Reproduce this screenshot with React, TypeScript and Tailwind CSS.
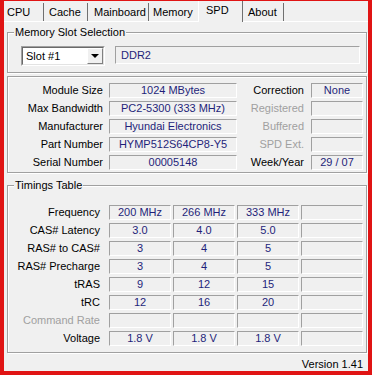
import React from "react";

const VAL = "text-[#1f1f7a]";

function Box({
  children,
  className = "",
}: {
  children?: React.ReactNode;
  className?: string;
}) {
  return (
    <div
      className={`h-[15px] flex items-center justify-center border border-t-[#a0a0a0] border-l-[#a0a0a0] border-b-white border-r-white leading-none whitespace-nowrap ${VAL} ${className}`}
    >
      {children}
    </div>
  );
}

function Group({
  title,
  className = "",
  children,
}: {
  title?: string;
  className?: string;
  children?: React.ReactNode;
}) {
  return (
    <div
      className={`relative w-[360px] border border-[#a0a0a0] shadow-[inset_1px_1px_0_#fff,1px_1px_0_#fff] ${className}`}
    >
      {title && (
        <span className="absolute left-[6px] -top-[8px] bg-[#f0f0f0] px-[1px] leading-[14px]">
          {title}
        </span>
      )}
      {children}
    </div>
  );
}

function Tab({
  children,
  className = "",
}: {
  children: React.ReactNode;
  className?: string;
}) {
  return (
    <div
      className={`h-[18px] border-r border-r-[#707070] leading-[14px] pt-[2px] ${className}`}
    >
      {children}
    </div>
  );
}

function InfoRow({
  label,
  value,
  rlabel,
  rvalue,
  rdim,
}: {
  label: string;
  value: string;
  rlabel: string;
  rvalue?: string;
  rdim?: boolean;
}) {
  return (
    <div className="flex items-center h-[15px]">
      <div className="w-[95px] text-right leading-[15px]">{label}</div>
      <Box className="ml-[6px] w-[128px]">{value}</Box>
      <div
        className={`w-[67px] text-right leading-[15px] ${rdim ? "text-[#a0a0a0]" : ""}`}
      >
        {rlabel}
      </div>
      <Box className="ml-[7px] w-[52px]">{rvalue}</Box>
    </div>
  );
}

function TimingRow({
  label,
  vals,
  dim,
}: {
  label: string;
  vals: string[];
  dim?: boolean;
}) {
  return (
    <div className="flex items-center h-[15px]">
      <div
        className={`w-[92px] text-right leading-[15px] ${dim ? "text-[#a0a0a0]" : ""}`}
      >
        {label}
      </div>
      <div className="ml-[9px] flex gap-[2px]">
        {[0, 1, 2, 3].map((i) => (
          <Box key={i} className="w-[62px]">
            {vals[i] ?? ""}
          </Box>
        ))}
      </div>
    </div>
  );
}

export default function App() {
  return (
    <div className="w-[372px] h-[375px] bg-[#e01414] pl-[4px] pr-[4px] pt-[1px] pb-[4px] font-['Liberation_Sans',Arial,sans-serif] text-[11px] text-black">
      <div className="w-[364px] h-[370px] bg-[#f0f0f0] flex flex-col">
        {/* Tabs */}
        <div className="flex h-[20px] items-end">
          <Tab className="w-[40px] pl-[3px]">CPU</Tab>
          <Tab className="w-[44px] pl-[5px]">Cache</Tab>
          <Tab className="w-[61px] pl-[6px]">Mainboard</Tab>
          <div className="w-[49px] h-[18px] pl-[4px] leading-[14px] pt-[2px]">
            Memory
          </div>
          <div className="relative z-10 w-[45px] h-[21px] -mb-[1px] bg-[#f0f0f0] border-l border-l-white border-r border-r-[#707070] pl-[7px] pt-[2px] leading-[14px]">
            SPD
          </div>
          <Tab className="w-[41px] pl-[5px]">About</Tab>
        </div>

        {/* Tab page */}
        <div className="flex-1 border-t border-t-white px-[3px] flex flex-col">
          <Group title="Memory Slot Selection" className="mt-[10px] h-[41px]">
            <div className="flex items-start pt-[13px] pl-[13px]">
              <div className="w-[84px] h-[20px] bg-white border border-t-[#a0a0a0] border-l-[#a0a0a0] border-b-white border-r-white flex">
                <div className="flex-1 flex border border-t-[#696969] border-l-[#696969] border-b-[#e3e3e3] border-r-[#e3e3e3]">
                  <div className="flex-1 pl-[3px] leading-[16px]">Slot #1</div>
                  <div className="w-[16px] h-[16px] bg-[#f0f0f0] border border-t-white border-l-white border-b-[#808080] border-r-[#808080] flex items-center justify-center">
                    <div className="w-0 h-0 border-l-[4px] border-r-[4px] border-t-[4px] border-l-transparent border-r-transparent border-t-black" />
                  </div>
                </div>
              </div>
              <div
                className={`ml-[10px] w-[245px] h-[18px] border border-t-[#a0a0a0] border-l-[#a0a0a0] border-b-white border-r-white pl-[5px] leading-[16px] ${VAL}`}
              >
                DDR2
              </div>
            </div>
          </Group>

          <Group className="mt-[3px] h-[97px]">
            <div className="flex flex-col gap-[3px] pt-[6px]">
              <InfoRow
                label="Module Size"
                value="1024 MBytes"
                rlabel="Correction"
                rvalue="None"
              />
              <InfoRow
                label="Max Bandwidth"
                value="PC2-5300 (333 MHz)"
                rlabel="Registered"
                rdim
              />
              <InfoRow
                label="Manufacturer"
                value="Hyundai Electronics"
                rlabel="Buffered"
                rdim
              />
              <InfoRow
                label="Part Number"
                value="HYMP512S64CP8-Y5"
                rlabel="SPD Ext."
                rdim
              />
              <InfoRow
                label="Serial Number"
                value="00005148"
                rlabel="Week/Year"
                rvalue="29 / 07"
              />
            </div>
          </Group>

          <Group title="Timings Table" className="mt-[12px] h-[168px]">
            <div className="flex flex-col gap-[3px] pt-[19px]">
              <TimingRow
                label="Frequency"
                vals={["200 MHz", "266 MHz", "333 MHz"]}
              />
              <TimingRow label="CAS# Latency" vals={["3.0", "4.0", "5.0"]} />
              <TimingRow label="RAS# to CAS#" vals={["3", "4", "5"]} />
              <TimingRow label="RAS# Precharge" vals={["3", "4", "5"]} />
              <TimingRow label="tRAS" vals={["9", "12", "15"]} />
              <TimingRow label="tRC" vals={["12", "16", "20"]} />
              <TimingRow label="Command Rate" vals={[]} dim />
              <TimingRow label="Voltage" vals={["1.8 V", "1.8 V", "1.8 V"]} />
            </div>
          </Group>

          <div className="mt-[4px] flex justify-end pr-[2px] leading-[14px]">
            Version 1.41
          </div>
        </div>
      </div>
    </div>
  );
}
